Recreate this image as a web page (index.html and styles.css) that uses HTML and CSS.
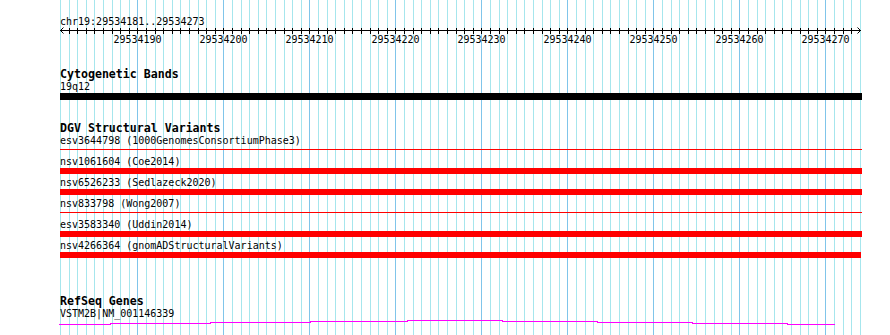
FILE: index.html
```html
<!DOCTYPE html>
<html lang="en">
<head>
    <meta charset="UTF-8">
    <meta name="viewport" content="width=device-width, initial-scale=1.0">
    <title>chr19:29534181..29534273</title>
    <link rel="stylesheet" href="styles.css">
</head>
<body>
    <svg class="grid" id="grid" width="890" height="335"></svg>

    <div class="browser">
        <div class="ruler">
            <div class="ruler-label">chr19:29534181..29534273</div>
            <svg class="ruler-axis" id="ruler-axis" width="810" height="20">
                <line class="axis-line" x1="0" y1="2.5" x2="801" y2="2.5"></line>
                <polyline class="axis-arrow" points="3.5,-0.5 0.5,2.5 3.5,5.5"></polyline>
                <polyline class="axis-arrow" points="797.5,-0.5 800.5,2.5 797.5,5.5"></polyline>
                <g class="axis-labels" id="axis-labels"></g>
            </svg>
        </div>

        <section class="track track-cyto">
            <h2 class="track-title">Cytogenetic Bands</h2>
            <div class="feature">
                <div class="feature-label">19q12</div>
                <div class="band"></div>
            </div>
        </section>

        <section class="track track-dgv">
            <h2 class="track-title">DGV Structural Variants</h2>
            <div class="feature">
                <div class="feature-label">esv3644798 (1000GenomesConsortiumPhase3)</div>
                <div class="variant variant-line"></div>
            </div>
            <div class="feature">
                <div class="feature-label">nsv1061604 (Coe2014)</div>
                <div class="variant variant-bar"></div>
            </div>
            <div class="feature">
                <div class="feature-label">nsv6526233 (Sedlazeck2020)</div>
                <div class="variant variant-bar"></div>
            </div>
            <div class="feature">
                <div class="feature-label">nsv833798 (Wong2007)</div>
                <div class="variant variant-line"></div>
            </div>
            <div class="feature">
                <div class="feature-label">esv3583340 (Uddin2014)</div>
                <div class="variant variant-bar"></div>
            </div>
            <div class="feature">
                <div class="feature-label">nsv4266364 (gnomADStructuralVariants)</div>
                <div class="variant variant-bar" style="width: 801px;"></div>
            </div>
        </section>

        <section class="track track-refseq">
            <h2 class="track-title">RefSeq Genes</h2>
            <div class="feature">
                <div class="feature-label">VSTM2B|NM_001146339</div>
                <svg class="gene" width="802" height="10">
                    <path class="gene-intron" d="M-1 4.5 H50 V3.5 H150 V2.5 H250 V1.5 H347 V0.5 H442 V1.5 H537 V2.5 H632 V3.5 H727 V4.5 H775"></path>
                </svg>
            </div>
        </section>
    </div>

    <script>
        document.addEventListener('DOMContentLoaded', function() {
            const svgNS = 'http://www.w3.org/2000/svg';
            const grid = document.getElementById('grid');
            const axis = document.getElementById('ruler-axis');
            const labels = document.getElementById('axis-labels');

            // View settings
            const startBase = 29534181;
            const baseCount = 94;
            const pxPerBase = 8.6;
            const leftEdge = 60;

            for (let k = 0; k < baseCount; k++) {
                const offset = Math.round(k * pxPerBase) + 0.5;
                const base = startBase + k;
                const major = base % 10 === 0;

                // Background grid line
                const gridLine = document.createElementNS(svgNS, 'line');
                gridLine.setAttribute('x1', leftEdge + offset);
                gridLine.setAttribute('x2', leftEdge + offset);
                gridLine.setAttribute('y1', 0);
                gridLine.setAttribute('y2', 335);
                gridLine.setAttribute('class', major ? 'grid-line grid-major' : 'grid-line');
                grid.appendChild(gridLine);

                // Ruler tick
                if (k > 0 && k < baseCount - 1) {
                    const tick = document.createElementNS(svgNS, 'line');
                    tick.setAttribute('x1', offset);
                    tick.setAttribute('x2', offset);
                    tick.setAttribute('y1', 0);
                    tick.setAttribute('y2', 6);
                    tick.setAttribute('class', 'axis-tick');
                    axis.insertBefore(tick, labels);
                }

                // Ruler label every 10 bases
                if (major) {
                    const text = document.createElementNS(svgNS, 'text');
                    text.setAttribute('x', offset);
                    text.setAttribute('y', 15);
                    text.setAttribute('class', 'axis-text');
                    text.textContent = base;
                    labels.appendChild(text);
                }
            }
        });
    </script>
</body>
</html>
```

FILE: styles.css
```css
* {
    margin: 0;
    padding: 0;
    box-sizing: border-box;
}

body {
    background-color: #fff;
    color: #000;
    font-family: 'DejaVu Sans Mono', 'Liberation Mono', monospace;
    font-size: 10px;
    position: relative;
    width: 890px;
    height: 335px;
    overflow: hidden;
}

.grid {
    position: absolute;
    top: 0;
    left: 0;
    shape-rendering: crispEdges;
}

.grid-line {
    stroke: #a6e6ed;
    stroke-width: 1;
}

.grid-major {
    stroke: #80c5ea;
}

.browser {
    position: relative;
    padding-left: 60px;
}

/* Ruler */
.ruler-label {
    margin-top: 16px;
    line-height: 12px;
}

.ruler-axis {
    display: block;
    overflow: visible;
}

.axis-line,
.axis-tick {
    stroke: #000;
    stroke-width: 1;
    shape-rendering: crispEdges;
}

.axis-arrow {
    fill: none;
    stroke: #000;
    stroke-width: 1;
}

.axis-text {
    font-family: 'DejaVu Sans Mono', 'Liberation Mono', monospace;
    font-size: 10px;
    text-anchor: middle;
    fill: #000;
}

/* Tracks */
.track-title {
    font-size: 11.6px;
    font-weight: bold;
    line-height: 12px;
}

.track-cyto {
    margin-top: 20px;
}

.track-dgv {
    margin-top: 22px;
}

.track-refseq {
    margin-top: 35px;
}

.feature-label {
    line-height: 13px;
    white-space: nowrap;
}

.band {
    width: 802px;
    height: 7px;
    background-color: #000;
}

.track-dgv .feature {
    padding-bottom: 2px;
}

.variant {
    width: 802px;
    background-color: #ff0000;
}

.variant-bar {
    height: 6px;
}

.variant-line {
    height: 1px;
    margin: 2px 0 3px;
}

.gene {
    display: block;
    overflow: visible;
}

.gene-intron {
    fill: none;
    stroke: #ff00ff;
    stroke-width: 1;
    shape-rendering: crispEdges;
}
```
